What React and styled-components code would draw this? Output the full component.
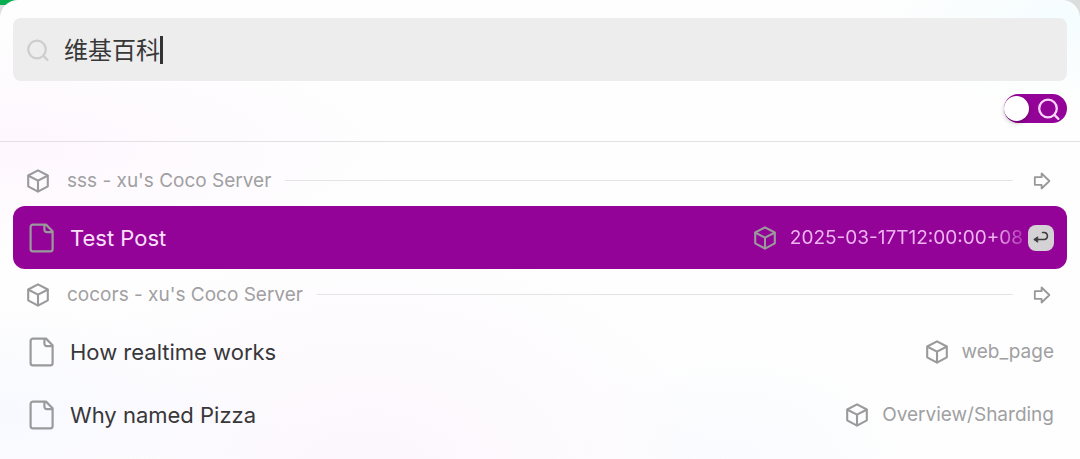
import React, { useState } from 'react'
import styled, { createGlobalStyle } from 'styled-components'

const groups = [
  {
    name: "sss - xu's Coco Server",
    items: [{ title: 'Test Post', category: '2025-03-17T12:00:00+08', selected: true }],
  },
  {
    name: "cocors - xu's Coco Server",
    items: [
      { title: 'How realtime works', category: 'web_page' },
      { title: 'Why named Pizza', category: 'Overview/Sharding' },
    ],
  },
]

const SearchIcon = ({ size, color, width }) => (
  <svg width={size} height={size} viewBox="0 0 24 24" fill="none" stroke={color} strokeWidth={width} strokeLinecap="round" aria-hidden="true">
    <circle cx="11" cy="11.5" r="8.8" />
    <path d="M17.4 17.9L21.4 21.9" />
  </svg>
)

const CubeIcon = () => (
  <svg width="24" height="24" viewBox="0 0 24 24" fill="none" stroke="#9a9a9c" strokeWidth="2.1" strokeLinejoin="round" strokeLinecap="round" aria-hidden="true">
    <path d="M12 1.4L21.8 6.5V17.3L12 22.6L2.2 17.3V6.5Z" />
    <path d="M2.5 6.8L12 11.6L21.5 6.8M12 11.6V22.3" />
  </svg>
)

const FileIcon = () => (
  <svg width="26" height="30" viewBox="0 0 26 30" fill="none" stroke="#9a9a9c" strokeWidth="2.2" strokeLinejoin="round" aria-hidden="true">
    <path d="M4 1.6H17L23.6 8.2V25.9A2.4 2.4 0 0 1 21.2 28.3H4A2.4 2.4 0 0 1 1.6 25.9V4A2.4 2.4 0 0 1 4 1.6Z" />
    <path d="M15.4 1.8V6.8A2.4 2.4 0 0 0 17.8 9.2H23.4" />
  </svg>
)

const ArrowIcon = () => (
  <svg width="18" height="18" viewBox="0 0 18 18" fill="none" stroke="#98989a" strokeWidth="1.8" strokeLinejoin="round" aria-hidden="true">
    <path d="M1.8 5.2H8.6V1.5L16.4 9L8.6 16.5V12.8H1.8Z" />
  </svg>
)

const ReturnIcon = () => (
  <svg width="18" height="16" viewBox="0 0 18 16" fill="none" stroke="#3d3d3d" strokeWidth="1.5" strokeLinecap="round" strokeLinejoin="round" aria-hidden="true">
    <path d="M3 9.5H12.7A3.6 3.6 0 0 0 12.7 2.5H10.5" />
    <path d="M5.4 7L1.8 9.5L5.4 12Z" fill="#3d3d3d" strokeWidth="1" />
  </svg>
)

const App = () => {
  const [query, setQuery] = useState('维基百科')
  const [chat, setChat] = useState(false)

  return (
    <>
      <GlobalStyle />
      <Window>
        <Header>
          <SearchBox>
            <SearchIcon size={24} color="#cdcdcd" width={2.2} />
            <Field>
              <SearchInput aria-label="Search" value={query} onChange={(e) => setQuery(e.target.value)} />
              <Caret />
            </Field>
          </SearchBox>
          <Tools>
            <Switch>
              <SwitchInput type="checkbox" role="switch" aria-label="Chat mode" checked={chat} onChange={() => setChat(!chat)} />
              <Knob $on={chat} />
              <SearchIcon size={24} color="#f9d5fb" width={2.3} />
            </Switch>
          </Tools>
        </Header>
        <Results>
          {groups.map((group) => (
            <section key={group.name}>
              <GroupHead>
                <CubeIcon />
                <GroupName>{group.name}</GroupName>
                <Line />
                <MoreButton aria-label="Open group">
                  <ArrowIcon />
                </MoreButton>
              </GroupHead>
              <List>
                {group.items.map((item) => (
                  <Row key={item.title} $selected={item.selected}>
                    <FileIcon />
                    <Title>{item.title}</Title>
                    <Meta>
                      <CubeIcon />
                      <Category $fade={item.selected}>{item.category}</Category>
                    </Meta>
                    {item.selected && (
                      <EnterButton aria-label="Open">
                        <ReturnIcon />
                      </EnterButton>
                    )}
                  </Row>
                ))}
              </List>
            </section>
          ))}
        </Results>
      </Window>
    </>
  )
}

const GlobalStyle = createGlobalStyle`
  * {
    box-sizing: border-box;
  }
  body {
    margin: 0;
    font-family: Inter, "Noto Sans CJK SC", sans-serif;
    background: linear-gradient(90deg, #0aae50 0 20px, #dcdedd 20px) top / 100% 5px no-repeat, #dcdedd;
  }
  svg {
    display: block;
    flex-shrink: 0;
  }
  button {
    border: 0;
    padding: 0;
    background: none;
    cursor: pointer;
  }
`

const Window = styled.main`
  min-height: 100vh;
  border-radius: 18px 18px 0 0;
  overflow: hidden;
  background:
    radial-gradient(ellipse at 0% 32%, #fef7fe 0, transparent 26%),
    radial-gradient(ellipse at 100% 4%, #f5fdff 0, transparent 14%),
    radial-gradient(ellipse at 0% 90%, #f8f9ff 0, transparent 20%),
    radial-gradient(ellipse at 34% 104%, #fcf6fd 0, transparent 36%),
    radial-gradient(ellipse at 68% 100%, #f9fbff 0, transparent 18%),
    #fefefe;
`

const Header = styled.header`
  padding: 18px 13px;
  border-bottom: 1px solid #e1e0e2;
`

const SearchBox = styled.div`
  display: flex;
  align-items: center;
  gap: 14px;
  height: 63px;
  padding: 0 13px;
  border-radius: 8px;
  background: #ededed;
`

const Field = styled.div`
  display: flex;
  align-items: center;
  flex: 1;
  min-width: 0;
`

const SearchInput = styled.input`
  field-sizing: content;
  max-width: 100%;
  padding: 3px 0 0;
  border: 0;
  outline: 0;
  background: none;
  color: #383838;
  caret-color: transparent;
  font: 24px/36px Inter, "Noto Sans CJK SC", sans-serif;
`

const Caret = styled.span`
  width: 3px;
  height: 28px;
  background: #333;
`

const Tools = styled.div`
  display: flex;
  justify-content: flex-end;
  padding-top: 13px;
`

const Switch = styled.label`
  position: relative;
  display: flex;
  align-items: center;
  justify-content: flex-end;
  width: 63px;
  height: 29px;
  padding-right: 6px;
  border-radius: 15px;
  background: #930397;
  cursor: pointer;
`

const SwitchInput = styled.input`
  position: absolute;
  inset: 0;
  width: 100%;
  height: 100%;
  margin: 0;
  opacity: 0;
`

const Knob = styled.span`
  position: absolute;
  top: 2px;
  left: ${(props) => (props.$on ? '37px' : '0')};
  width: 25px;
  height: 25px;
  border-radius: 50%;
  background: #fff;
  box-shadow: 0 2px 4px rgba(0, 0, 0, 0.25);
  pointer-events: none;
`

const Results = styled.div`
  padding: 13px 13px 12px;
`

const GroupHead = styled.div`
  display: flex;
  align-items: center;
  height: 51px;
  padding: 0 16px 0 13px;
`

const GroupName = styled.h2`
  margin: 0 14px 0 17px;
  color: #a0a0a2;
  font-size: 19px;
  font-weight: 400;
  line-height: 24px;
  white-space: nowrap;
`

const Line = styled.span`
  flex: 1;
  height: 1px;
  background: #e4e3e5;
`

const MoreButton = styled.button`
  margin-left: 20px;
`

const List = styled.ul`
  margin: 0;
  padding: 0;
  list-style: none;
`

const Row = styled.li`
  display: flex;
  align-items: center;
  height: 63px;
  padding: 0 13px 0 16px;
  border-radius: 12px;
  background: ${(props) => (props.$selected ? '#930397' : 'transparent')};
  color: ${(props) => (props.$selected ? '#fbe0fc' : '#38373a')};
`

const Title = styled.span`
  flex: 1;
  margin-left: 15px;
  font-size: 22px;
  line-height: 28px;
  white-space: nowrap;
`

const Meta = styled.span`
  display: flex;
  align-items: center;
  gap: 13px;
`

const Category = styled.span`
  color: ${(props) => (props.$fade ? '#eeb4f0' : '#a0a0a2')};
  font-size: 19px;
  line-height: 25px;
  white-space: nowrap;
  mask-image: ${(props) => (props.$fade ? 'linear-gradient(90deg, #000 88%, rgba(0, 0, 0, 0.3))' : 'none')};
`

const EnterButton = styled.button`
  display: flex;
  align-items: center;
  justify-content: center;
  width: 26px;
  height: 26px;
  margin-left: 5px;
  border-radius: 8px;
  background: #d4d2d4;
`

export default App
